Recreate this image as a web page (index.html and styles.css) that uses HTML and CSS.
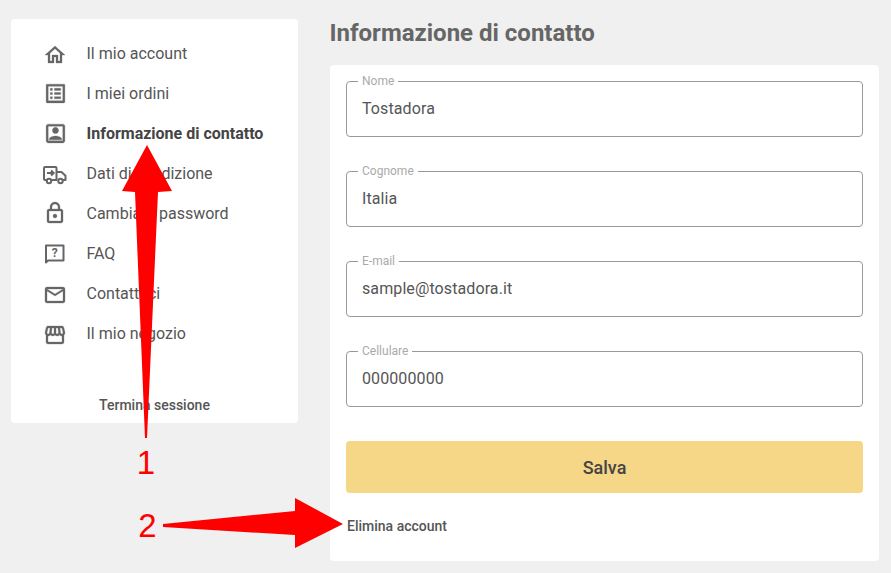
FILE: index.html
```html
<!DOCTYPE html>
<html lang="en">
<head>
  <meta charset="UTF-8">
  <meta name="viewport" content="width=device-width, initial-scale=1.0">
  <title>Informazione di contatto</title>
  <link rel="stylesheet" href="styles.css">
</head>
<body>

<div class="layout">
  <aside class="sidebar">
    <nav class="menu">
      <a class="menu-item" href="#">
        <svg class="menu-icon icon-low" viewBox="0 0 24 24"><path d="M12 5.690l5 4.500V18h-2v-6H9v6H7v-7.810l5-4.500M12 3L2 12h3v8h6v-6h2v6h6v-8h3L12 3z"/></svg>
        <span>Il mio account</span>
      </a>
      <a class="menu-item" href="#">
        <svg class="menu-icon icon-big" viewBox="0 0 24 24"><path d="M19 5v14H5V5h14m1.100-2H3.900c-.5 0-.9.4-.9.9v16.200c0 .4.4.9.9.9h16.200c.4 0 .9-.5.9-.9V3.900c0-.5-.5-.9-.9-.9zM11 7h6v2h-6V7zm0 4h6v2h-6v-2zm0 4h6v2h-6v-2zM7 7h2v2H7V7zm0 4h2v2H7v-2zm0 4h2v2H7v-2z"/></svg>
        <span>I miei ordini</span>
      </a>
      <a class="menu-item active" href="#">
        <svg class="menu-icon icon-big" viewBox="0 0 24 24"><path d="M3 5v14c0 1.100.9 2 2 2h14c1.100 0 2-.9 2-2V5c0-1.100-.9-2-2-2H5c-1.100 0-2 .9-2 2zm16 14H5V5h14v14zM12 12c1.650 0 3-1.350 3-3s-1.350-3-3-3-3 1.350-3 3 1.350 3 3 3zm6 5.500c0-2-4-3.100-6-3.100s-6 1.100-6 3.100V18h12v-.5z"/></svg>
        <span>Informazione di contatto</span>
      </a>
      <a class="menu-item" href="#">
        <svg class="menu-icon icon-line" viewBox="0 0 24 24">
          <path d="M3.500 19H2a1 1 0 0 1-1-1V7a1 1 0 0 1 1-1h10.500a1 1 0 0 1 1 1v12H8.500M13.500 11h5l4 3.800V19h-2.500M14 19h.5"/>
          <circle cx="6" cy="20" r="2.200"/>
          <circle cx="17.500" cy="20" r="2.200"/>
          <path d="M4 12h6.500M8 9.500l2.800 2.500L8 14.500"/>
        </svg>
        <span>Dati di spedizione</span>
      </a>
      <a class="menu-item" href="#">
        <svg class="menu-icon" viewBox="0 0 24 24"><path d="M18 8h-1V6c0-2.760-2.240-5-5-5S7 3.240 7 6v2H6c-1.100 0-2 .9-2 2v10c0 1.100.9 2 2 2h12c1.100 0 2-.9 2-2V10c0-1.100-.9-2-2-2zM9 6c0-1.660 1.340-3 3-3s3 1.340 3 3v2H9V6zm9 14H6V10h12v10zm-6-3c1.100 0 2-.9 2-2s-.9-2-2-2-2 .9-2 2 .9 2 2 2z"/></svg>
        <span>Cambiare password</span>
      </a>
      <a class="menu-item" href="#">
        <svg class="menu-icon icon-line" viewBox="0 0 24 24">
          <path d="M3 21.500V4.500h17.500v15H5L3 21.500z"/>
          <text class="icon-mark" x="11.700" y="15.500" text-anchor="middle">?</text>
        </svg>
        <span>FAQ</span>
      </a>
      <a class="menu-item" href="#">
        <svg class="menu-icon icon-low" viewBox="0 0 24 24"><path d="M22 6c0-1.100-.9-2-2-2H4c-1.100 0-2 .9-2 2v12c0 1.100.9 2 2 2h16c1.100 0 2-.9 2-2V6zm-2 0l-8 5-8-5h16zm0 12H4V8l8 5 8-5v10z"/></svg>
        <span>Contattaci</span>
      </a>
      <a class="menu-item" href="#">
        <svg class="menu-icon icon-low" viewBox="0 0 24 24"><path d="M21.900 8.890l-1.050-4.370c-.22-.9-1-1.520-1.910-1.520H5.050c-.9 0-1.690.63-1.900 1.520L2.100 8.890c-.24 1.020-.02 2.060.62 2.880.08.110.19.190.28.290V19c0 1.100.9 2 2 2h14c1.100 0 2-.9 2-2v-6.940c.09-.09.2-.18.280-.28.640-.82.870-1.870.62-2.890zM7.020 5l-.58 4.860C6.360 10.500 5.840 11 5.230 11c-.49 0-.8-.29-.93-.47-.26-.33-.35-.76-.25-1.170L5.050 5h1.970zm1.960 0H11v4.700c0 .72-.55 1.300-1.250 1.300-.71 0-1.250-.62-1.170-1.380L8.980 5zM13 5h2.020l.4 4.620c.08.760-.46 1.380-1.170 1.380-.7 0-1.250-.58-1.250-1.300V5zm5.950 0l1 4.360c.1.420.01.840-.25 1.170-.14.180-.44.470-.93.470-.61 0-1.130-.5-1.210-1.140L16.980 5h1.970zM5 19v-6.030c.08.010.15.030.23.030.87 0 1.660-.36 2.240-.95.600.6 1.400.950 2.310.950.870 0 1.650-.36 2.230-.93.590.57 1.390.93 2.290.93.840 0 1.640-.35 2.240-.95.580.59 1.370.95 2.240.95.080 0 .15-.2.230-.03V19H5z"/></svg>
        <span>Il mio negozio</span>
      </a>
    </nav>
    <a class="logout" href="#">Termina sessione</a>
  </aside>

  <main class="content">
    <h1 class="page-title">Informazione di contatto</h1>
    <section class="card">
      <fieldset class="field">
        <legend>Nome</legend>
        <input type="text" value="Tostadora">
      </fieldset>
      <fieldset class="field">
        <legend>Cognome</legend>
        <input type="text" value="Italia">
      </fieldset>
      <fieldset class="field">
        <legend>E-mail</legend>
        <input type="text" value="sample@tostadora.it">
      </fieldset>
      <fieldset class="field">
        <legend>Cellulare</legend>
        <input type="text" value="000000000">
      </fieldset>
      <button class="btn-save">Salva</button>
      <a class="delete-link" href="#">Elimina account</a>
    </section>
  </main>
</div>

<!-- red annotations on top of the screenshot -->
<svg class="annotations" viewBox="0 0 891 573">
  <path d="M147 145L172 191L158 192L147 438L145 438L135 192L122 191Z"/>
  <path d="M163 524L295 511L295 498L343 524L295 548L295 535L163 527Z"/>
  <text x="146" y="474" text-anchor="middle">1</text>
  <text x="147.500" y="537" text-anchor="middle">2</text>
</svg>

</body>
</html>
```

FILE: styles.css
```css
html, body {
  height: 100%;
}
body {
  margin: 0;
  position: relative;
  overflow: hidden;
  background-color: #f0f0f0;
  font-family: Roboto, "Liberation Sans", sans-serif;
  color: #555;
}
a {
  text-decoration: none;
  color: inherit;
}
.layout {
  display: flex;
  align-items: flex-start;
  gap: 31.5px;
  padding: 19px 12px 0 11px;
}
.sidebar {
  width: 287px;
  height: 404px;
  flex-shrink: 0;
  display: flex;
  flex-direction: column;
  justify-content: space-between;
  background-color: #fff;
  border-radius: 4px;
}
.menu {
  display: flex;
  flex-direction: column;
  padding-top: 14px;
}
.menu-item {
  display: flex;
  align-items: center;
  height: 40px;
  padding-left: 32px;
  font-size: 16px;
}
.menu-item.active {
  font-weight: 700;
  color: #444;
}
.menu-icon {
  width: 24px;
  height: 24px;
  margin-right: 19.5px;
  flex-shrink: 0;
  fill: #666;
  stroke: #666;
  stroke-width: 0.3;
}
.icon-low {
  margin-top: 4px;
}
.icon-big {
  width: 25px;
  height: 25px;
  margin-left: -0.5px;
  margin-right: 19px;
}
.icon-line {
  fill: none;
  stroke-width: 2;
  stroke-linejoin: round;
}
.icon-mark {
  font-size: 12px;
  font-weight: 700;
  fill: #666;
  stroke: none;
}
.logout {
  display: block;
  padding-bottom: 10px;
  text-align: center;
  font-size: 14px;
  font-weight: 500;
}
.content {
  flex: 1;
}
.page-title {
  margin: -1px 0 17px;
  font-size: 24px;
  line-height: 30px;
  font-weight: 700;
  color: #666;
}
.card {
  display: flex;
  flex-direction: column;
  height: 496px;
  box-sizing: border-box;
  padding: 16px;
  margin-left: 0.5px;
  background-color: #fff;
  border-radius: 4px;
}
.field {
  height: 62px;
  box-sizing: border-box;
  margin: -6px 0 34px;
  padding: 0 15px;
  border: 1px solid #999;
  border-radius: 4px;
}
.field + .field {
  margin-top: -6px;
}
.field legend {
  padding: 0 4px;
  margin-left: -4px;
  font-size: 12px;
  line-height: 12px;
  color: #aaa;
}
.field input {
  width: 100%;
  height: 42px;
  padding: 0;
  border: none;
  outline: none;
  background: none;
  font-family: inherit;
  font-size: 16px;
  letter-spacing: 0.1px;
  color: #555;
}
.btn-save {
  height: 52px;
  padding: 0;
  border: none;
  border-radius: 4px;
  background-color: #f6d687;
  font-family: inherit;
  font-size: 18px;
  font-weight: 500;
  color: #444;
}
.delete-link {
  margin-top: 25px;
  padding-left: 1px;
  font-size: 14px;
  line-height: 16px;
  font-weight: 500;
}
.annotations {
  position: absolute;
  top: 0;
  left: 0;
  width: 891px;
  height: 573px;
  pointer-events: none;
}
.annotations path {
  fill: #ff0000;
}
.annotations text {
  font-family: "Liberation Sans", sans-serif;
  font-size: 33px;
  fill: #ff0000;
}
```
